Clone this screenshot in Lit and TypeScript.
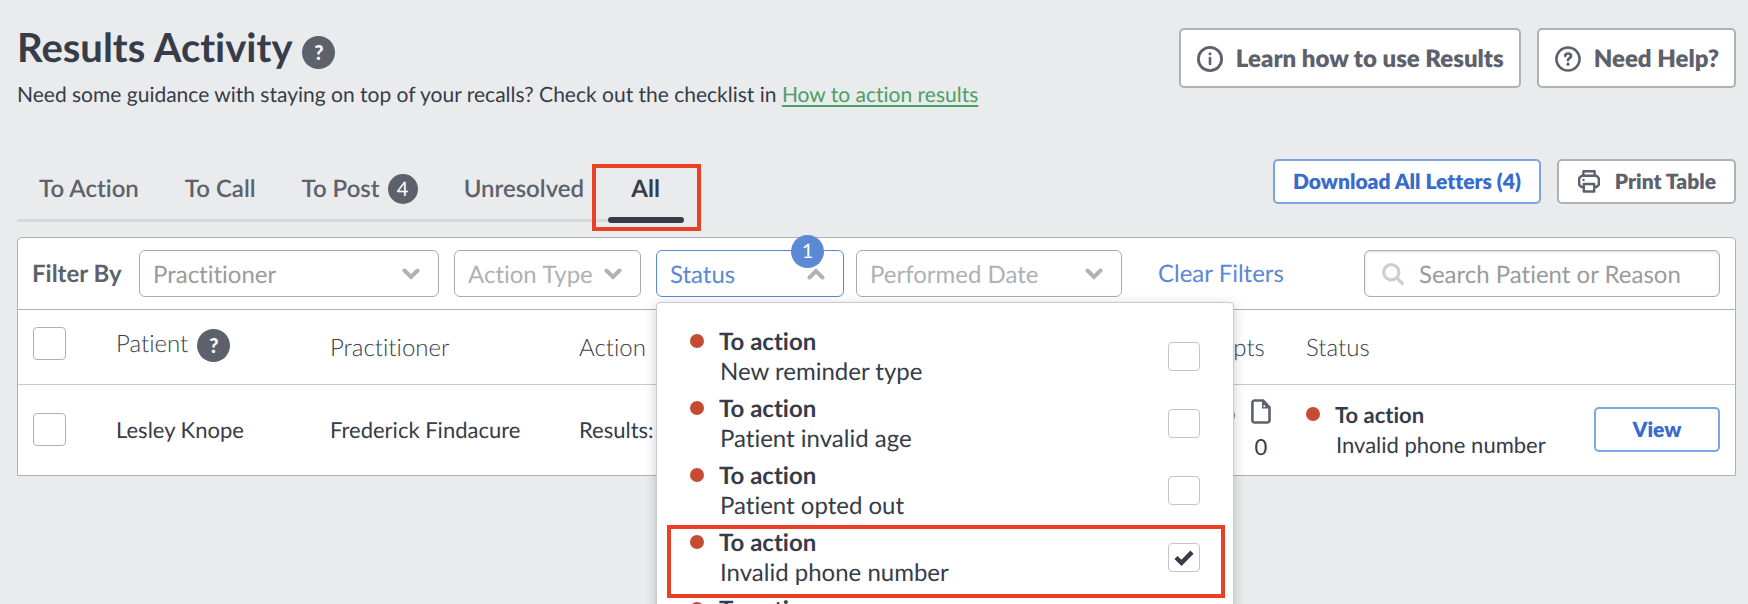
import { LitElement, html, css, svg, nothing } from "lit";
import { customElement, property, state } from "lit/decorators.js";
import { classMap } from "lit/directives/class-map.js";

interface StatusOption {
  title: string;
  detail: string;
  checked?: boolean;
  marked?: boolean;
}

const chevron = (up = false) => html`<svg class="chevron" viewBox="0 0 18 12" aria-hidden="true">
  ${up
    ? svg`<path d="M2.5 9.5 9 3l6.5 6.5" />`
    : svg`<path d="M2.5 2.5 9 9l6.5-6.5" />`}
</svg>`;

const infoIcon = html`<svg class="icon-info" viewBox="0 0 26 26" aria-hidden="true">
  <circle cx="13" cy="13" r="11.6" fill="none" stroke="currentColor" stroke-width="2.8" />
  <circle cx="13" cy="7.8" r="1.5" fill="currentColor" />
  <path d="M13 12v6" stroke="currentColor" stroke-width="2.6" stroke-linecap="round" />
</svg>`;

const questionIcon = html`<svg class="icon-question" viewBox="0 0 26 26" aria-hidden="true">
  <circle cx="13" cy="13" r="11.6" fill="none" stroke="currentColor" stroke-width="2.5" />
  <path d="M10.200 9.800c.2-1.500 1.300-2.300 2.900-2.300 1.700 0 2.900 1 2.900 2.400 0 2.100-3 2.200-3 4.300" fill="none" stroke="currentColor" stroke-width="2.700" stroke-linecap="round" />
  <circle cx="13" cy="18.200" r="1.600" fill="currentColor" />
</svg>`;

const printIcon = html`<svg class="icon-print" viewBox="0 0 24 24" aria-hidden="true">
  <g fill="none" stroke="currentColor" stroke-width="2.400" stroke-linejoin="round">
    <path d="M6.400 6.500V2.200h11.200v4.300" />
    <path d="M6 18H4.600L2.200 15.800V9.200L4.600 6.800h14.800l2.400 2.400v6.600L19.400 18H18" />
    <path d="M6.800 15h10.400v7.500H6.800z" />
  </g>
  <circle cx="6.500" cy="11" r="1.200" fill="currentColor" />
</svg>`;

const searchIcon = html`<svg class="icon-search" viewBox="0 0 22 22" aria-hidden="true">
  <circle cx="9.300" cy="9.300" r="7.600" fill="none" stroke="currentColor" stroke-width="3.200" />
  <path d="m15.200 15.200 5 5" stroke="currentColor" stroke-width="3.400" stroke-linecap="round" />
</svg>`;

const fileIcon = html`<svg class="icon-file" viewBox="0 0 20 25" aria-hidden="true">
  <path d="M3.600 1.500h8.400l6.500 7v12.700a2.300 2.300 0 0 1-2.300 2.300H3.600a2.200 2.200 0 0 1-2.200-2.300V3.700a2.200 2.200 0 0 1 2.200-2.200z" fill="none" stroke="currentColor" stroke-width="2.600" stroke-linejoin="round" />
  <path d="M11 2v7.500h7.500z" fill="currentColor" />
  <circle cx="13.300" cy="7.200" r="1" fill="#fff" />
</svg>`;

const messageIcon = html`<svg class="icon-file" viewBox="0 0 20 25" aria-hidden="true">
  <path d="M10 9c5 0 8.700 3.200 8.700 7.500S15 24 10 24c-1.300 0-2.500-.2-3.600-.6L2 24.500l1.200-3.700c-1.200-1.200-1.900-2.700-1.900-4.300C1.300 12.200 5 9 10 9z" fill="none" stroke="currentColor" stroke-width="2.400" stroke-linejoin="round" />
</svg>`;

@customElement("help-dot")
export class HelpDot extends LitElement {
  @property() label = "Help";

  static styles = css`
    :host {
      display: inline-flex;
    }
    .dot {
      width: 33px;
      height: 33px;
      padding: 0;
      border: 0;
      border-radius: 50%;
      background: #5d616c;
      color: #fff;
      font: 900 20px/33px Lato, sans-serif;
      text-align: center;
    }
  `;

  render() {
    return html`<button class="dot" aria-label=${this.label}>?</button>`;
  }
}

@customElement("status-text")
export class StatusText extends LitElement {
  @property() heading = "";
  @property() detail = "";

  static styles = css`
    :host {
      display: grid;
      grid-template-columns: 14px 1fr;
      column-gap: 15px;
      line-height: 30px;
      color: #363c49;
    }
    .dot {
      width: 14px;
      height: 14px;
      margin-top: 7px;
      border-radius: 50%;
      background: #c54c33;
    }
    .heading {
      font-weight: 700;
    }
    .detail {
      grid-column: 2;
      padding-left: 1px;
      white-space: nowrap;
    }
  `;

  render() {
    return html`<span class="dot"></span>
      <span class="heading">${this.heading}</span>
      <span class="detail">${this.detail}</span>`;
  }
}

@customElement("status-menu")
export class StatusMenu extends LitElement {
  @property({ attribute: false }) options: StatusOption[] = [];

  static styles = css`
    :host {
      display: block;
      box-sizing: border-box;
      padding: 20px 10px;
      border: 1px solid #c9cacc;
      border-radius: 4px;
      background: #fff;
      box-shadow: 0 3px 12px rgba(40, 45, 55, 0.25);
      font-size: 24px;
    }
    .option {
      position: relative;
      display: flex;
      align-items: center;
      justify-content: space-between;
      height: 67px;
      padding: 0 23px;
    }
    .marked::after {
      content: "";
      position: absolute;
      inset: 1px -2px -7px 0;
      border: 4px solid #ea4025;
    }
    .tick {
      display: grid;
      place-items: center;
    }
    .box,
    .mark {
      grid-area: 1 / 1;
    }
    .box {
      appearance: none;
      width: 32px;
      height: 29px;
      margin: 0;
      border: 1px solid #c4c4c7;
      border-radius: 4px;
      background: #fff;
    }
    .mark {
      width: 20px;
      height: 16px;
      fill: none;
      stroke: #363c49;
      stroke-width: 4.500;
      pointer-events: none;
      visibility: hidden;
    }
    .box:checked + .mark {
      visibility: visible;
    }
  `;

  render() {
    return this.options.map(
      (o) => html`<label class=${classMap({ option: true, marked: !!o.marked })}>
        <status-text .heading=${o.title} .detail=${o.detail}></status-text>
        <span class="tick">
          <input class="box" type="checkbox" .checked=${!!o.checked} aria-label="${o.title} ${o.detail}" />
          <svg class="mark" viewBox="0 0 20 16" aria-hidden="true"><path d="M2 7.500 7.500 12.800 18 2.200" /></svg>
        </span>
      </label>`,
    );
  }
}

@customElement("app-root")
export class AppRoot extends LitElement {
  @state() private menuOpen = true;

  private tabs = [
    { name: "To Action" },
    { name: "To Call" },
    { name: "To Post", count: 4 },
    { name: "Unresolved" },
    { name: "All", active: true },
  ];

  private options: StatusOption[] = [
    { title: "To action", detail: "New reminder type" },
    { title: "To action", detail: "Patient invalid age" },
    { title: "To action", detail: "Patient opted out" },
    { title: "To action", detail: "Invalid phone number", checked: true, marked: true },
    { title: "To action", detail: "Invalid address" },
  ];

  static styles = css`
    :host {
      display: block;
      box-sizing: border-box;
      min-height: 100vh;
      padding: 23px 12px 0 17px;
      overflow: hidden;
      position: relative;
      background: #e9ebec;
      color: #363c49;
      font-family: Lato, sans-serif;
      font-size: 22px;
      font-variant-ligatures: none;
      text-rendering: geometricPrecision;
    }
    button,
    input,
    select {
      box-sizing: border-box;
      font-family: inherit;
      font-variant-ligatures: none;
      text-rendering: inherit;
    }
    .top,
    .bar {
      display: flex;
      justify-content: space-between;
      align-items: flex-start;
    }
    .heading {
      display: flex;
      align-items: center;
      gap: 10px;
    }
    h1 {
      margin: 0;
      font-size: 40px;
      font-weight: 700;
      line-height: 48px;
    }
    .heading help-dot {
      margin-top: 10px;
    }
    .intro {
      margin: 10px 0 0;
      font-size: 21px;
      line-height: 28px;
    }
    .intro a {
      color: #4ba066;
      text-decoration-thickness: 2px;
      text-underline-offset: 3px;
    }
    .actions {
      display: flex;
      gap: 16px;
    }
    .top .actions {
      margin-top: 5px;
    }
    .btn {
      display: flex;
      align-items: center;
      height: 45px;
      padding: 0 18px;
      border: 2px solid #afb1b6;
      border-radius: 5px;
      background: #fff;
      color: #5d616c;
      font-size: 21px;
      font-weight: 800;
      white-space: nowrap;
    }
    .large {
      height: 60px;
      padding: 1px 15px 0 16px;
      gap: 13px;
      font-size: 24px;
    }
    .print {
      gap: 14px;
    }
    .blue {
      border-color: #7ea5e3;
      color: #386bcb;
    }
    .icon-info,
    .icon-question {
      width: 26px;
      height: 26px;
    }
    .icon-print {
      width: 24px;
      height: 24px;
      margin-top: -2px;
    }
    .bar {
      margin-top: 50px;
    }
    .tabs {
      position: relative;
      display: flex;
      gap: 1px;
    }
    .tabs::before {
      content: "";
      position: absolute;
      inset: auto 0 1px 0;
      height: 3px;
      background: #d5d7d9;
    }
    .tab {
      position: relative;
      display: flex;
      align-items: center;
      justify-content: center;
      gap: 8px;
      min-width: 76px;
      height: 64px;
      padding: 0 23px 4px 22px;
      border: 0;
      background: none;
      color: #5d616c;
      font-size: 24px;
      font-weight: 600;
      line-height: 30px;
    }
    .active {
      color: #363c49;
      font-weight: 700;
    }
    .active::before {
      content: "";
      position: absolute;
      inset: auto 0 0 0;
      height: 6px;
      border-radius: 3px;
      background: #363c49;
    }
    .active::after {
      content: "";
      position: absolute;
      inset: 5px -17px -8px -16px;
      border: 4px solid #ea4025;
    }
    .count {
      width: 30px;
      border-radius: 50%;
      background: #5d616c;
      color: #fff;
      font-size: 20px;
      font-weight: 400;
      text-align: center;
    }
    .panel {
      margin-top: 14px;
      border: 1px solid #afb1b6;
      border-radius: 5px 5px 0 0;
      background: #fff;
    }
    .filters {
      display: flex;
      align-items: center;
      gap: 15px;
      padding: 12px 15px 12px 14px;
      border-bottom: 1px solid #afb1b6;
      font-size: 24px;
    }
    .filter-label {
      min-width: 92px;
      color: #5d616c;
      font-weight: 700;
      white-space: nowrap;
    }
    .pair {
      display: flex;
      gap: 12px;
    }
    .field {
      position: relative;
      display: grid;
      align-items: center;
    }
    .field > * {
      grid-area: 1 / 1;
    }
    .control {
      appearance: none;
      width: 100%;
      height: 47px;
      padding: 2px 13px 0;
      border: 1px solid #a9abb1;
      border-radius: 6px;
      background: #fff;
      color: #afb1b6;
      font-size: 24px;
      text-align: left;
    }
    .wide {
      width: 300px;
    }
    .wide .control {
      color: #9b9b9b;
    }
    .narrow {
      width: 187px;
    }
    .status {
      width: 188px;
    }
    .status .control {
      border-color: #5c89d3;
      color: #5c89d3;
    }
    .date {
      width: 266px;
    }
    .chevron {
      justify-self: end;
      width: 18px;
      height: 12px;
      margin-right: 19px;
      fill: none;
      stroke: #afb1b6;
      stroke-width: 4;
      stroke-linecap: round;
      pointer-events: none;
    }
    .badge {
      position: absolute;
      top: -15px;
      right: 20px;
      width: 33px;
      border-radius: 50%;
      background: #5c89d3;
      color: #fff;
      font-size: 20px;
      line-height: 33px;
      text-align: center;
      pointer-events: none;
    }
    .menu {
      position: absolute;
      top: 52px;
      left: 0;
      z-index: 2;
      width: 578px;
    }
    .clear {
      margin-left: 21px;
      padding: 0;
      border: 0;
      background: none;
      color: #5c89d3;
      font-size: 24px;
      white-space: nowrap;
    }
    .search {
      width: 356px;
      margin-left: auto;
    }
    .search .control {
      padding-left: 54px;
      box-shadow: inset 0 1px 3px rgba(0, 0, 0, 0.12);
      color: #363c49;
    }
    .control::placeholder {
      color: #9b9b9b;
      opacity: 1;
    }
    .icon-search {
      width: 22px;
      height: 22px;
      margin-left: 18px;
      color: #cfcfcf;
      pointer-events: none;
    }
    table {
      width: 100%;
      border-collapse: collapse;
      table-layout: fixed;
    }
    th,
    td {
      padding: 0 15px;
      text-align: left;
      white-space: nowrap;
    }
    th {
      height: 74px;
      border-bottom: 1px solid #c9cacf;
      font-size: 24px;
      font-weight: 300;
    }
    td {
      height: 88px;
      padding-bottom: 2px;
    }
    .c-check {
      width: 83px;
    }
    .c-patient {
      width: 214px;
    }
    .c-practitioner {
      width: 249px;
    }
    .c-attempts {
      width: 136px;
    }
    .c-status {
      width: 288px;
    }
    .c-view {
      width: 156px;
    }
    .check {
      appearance: none;
      display: block;
      width: 33px;
      height: 33px;
      margin: 0;
      border: 1px solid #afb1b6;
      border-radius: 4px;
      background: #fff;
    }
    .head {
      margin-bottom: 8px;
    }
    .with-help {
      display: flex;
      align-items: center;
      gap: 9px;
      margin-bottom: 8px;
    }
    .with-help help-dot {
      margin-top: 5px;
    }
    .tries {
      display: flex;
      justify-content: flex-end;
      gap: 16px;
      padding: 2px 5px 0 0;
      line-height: 30px;
    }
    .try {
      display: grid;
      justify-items: center;
      gap: 8px;
      width: 20px;
    }
    .icon-file {
      width: 20px;
      height: 25px;
      color: #5d616c;
    }
    .row-status {
      padding-top: 2px;
    }
    .view {
      justify-content: center;
      width: 100%;
    }
  `;

  private select(cls: string, label: string) {
    return html`<div class="field ${cls}">
      <select class="control" aria-label=${label}>
        <option>${label}</option>
      </select>
      ${chevron()}
    </div>`;
  }

  render() {
    return html`
      <header class="top">
        <div>
          <div class="heading">
            <h1>Results Activity</h1>
            <help-dot label="About results activity"></help-dot>
          </div>
          <p class="intro">
            Need some guidance with staying on top of your recalls? Check out the checklist in
            <a href="#results">How to action results</a>
          </p>
        </div>
        <div class="actions">
          <button class="btn large">${infoIcon}Learn how to use Results</button>
          <button class="btn large">${questionIcon}Need Help?</button>
        </div>
      </header>

      <div class="bar">
        <nav class="tabs">
          ${this.tabs.map(
            (t) => html`<button class=${classMap({ tab: true, active: !!t.active })}>
              ${t.name}${t.count ? html`<span class="count">${t.count}</span>` : nothing}
            </button>`,
          )}
        </nav>
        <div class="actions">
          <button class="btn blue">Download All Letters (4)</button>
          <button class="btn print">${printIcon}Print Table</button>
        </div>
      </div>

      <section class="panel">
        <div class="filters">
          <span class="filter-label">Filter By</span>
          ${this.select("wide", "Practitioner")} ${this.select("narrow", "Action Type")}
          <div class="pair">
            <div class="field status">
              <button
                class="control"
                aria-expanded=${this.menuOpen}
                @click=${() => (this.menuOpen = !this.menuOpen)}
              >
                Status
              </button>
              ${chevron(this.menuOpen)}
              <span class="badge">1</span>
              ${this.menuOpen
                ? html`<status-menu class="menu" .options=${this.options}></status-menu>`
                : nothing}
            </div>
            ${this.select("date", "Performed Date")}
          </div>
          <button class="clear">Clear Filters</button>
          <div class="field search">
            <input class="control" type="search" aria-label="Search" placeholder="Search Patient or Reason" />
            ${searchIcon}
          </div>
        </div>

        <table>
          <colgroup>
            <col class="c-check" />
            <col class="c-patient" />
            <col class="c-practitioner" />
            <col />
            <col class="c-attempts" />
            <col class="c-status" />
            <col class="c-view" />
          </colgroup>
          <thead>
            <tr>
              <th><input class="check head" type="checkbox" aria-label="Select all" /></th>
              <th>
                <div class="with-help">Patient<help-dot label="About patients"></help-dot></div>
              </th>
              <th>Practitioner</th>
              <th>Action</th>
              <th>Attempts</th>
              <th>Status</th>
              <th></th>
            </tr>
          </thead>
          <tbody>
            <tr>
              <td><input class="check" type="checkbox" aria-label="Select Lesley Knope" /></td>
              <td>Lesley Knope</td>
              <td>Frederick Findacure</td>
              <td>Results:</td>
              <td>
                <div class="tries">
                  <span class="try">${messageIcon}0</span>
                  <span class="try">${fileIcon}0</span>
                </div>
              </td>
              <td>
                <status-text class="row-status" heading="To action" detail="Invalid phone number"></status-text>
              </td>
              <td><button class="btn blue view">View</button></td>
            </tr>
          </tbody>
        </table>
      </section>
    `;
  }
}
